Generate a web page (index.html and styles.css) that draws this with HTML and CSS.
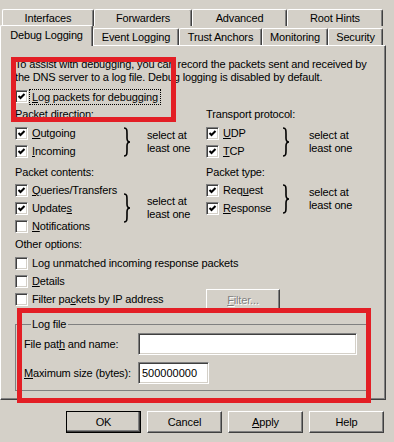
FILE: index.html
```html
<!DOCTYPE html>
<html lang="en">
<head>
    <meta charset="UTF-8">
    <meta name="viewport" content="width=device-width, initial-scale=1.0">
    <title>DNS Server Properties</title>
    <link rel="stylesheet" href="styles.css">
</head>
<body>
    <div class="dialog">
        <div class="tab-row back">
            <div class="tab" style="width: 92px">Interfaces</div>
            <div class="tab" style="width: 98px">Forwarders</div>
            <div class="tab" style="width: 95px">Advanced</div>
            <div class="tab" style="width: 96px">Root Hints</div>
        </div>
        <div class="tab-row front">
            <div class="tab selected" style="width: 93px">Debug Logging</div>
            <div class="tab" style="width: 86px">Event Logging</div>
            <div class="tab" style="width: 83px">Trust Anchors</div>
            <div class="tab" style="width: 66px">Monitoring</div>
            <div class="tab" style="width: 55px">Security</div>
        </div>

        <div class="panel">
            <p class="intro">To assist with debugging, you can record the packets sent and received by<br>the DNS server to a log file. Debug logging is disabled by default.</p>

            <div class="check-row first">
                <span class="cb"><svg viewBox="0 0 9 9"><path d="M1.5 4 L3.5 6 L7.5 2"/></svg></span>
                <span class="focus"><u>L</u>og packets for debugging</span>
            </div>

            <div class="options">
                <div class="col col-left">
                    <div class="caption">Packet direction:</div>
                    <div class="group">
                        <div class="checks">
                            <div class="check-row"><span class="cb"><svg viewBox="0 0 9 9"><path d="M1.5 4 L3.5 6 L7.5 2"/></svg></span><span><u>O</u>utgoing</span></div>
                            <div class="check-row"><span class="cb"><svg viewBox="0 0 9 9"><path d="M1.5 4 L3.5 6 L7.5 2"/></svg></span><span><u>I</u>ncoming</span></div>
                        </div>
                        <svg class="brace" viewBox="0 0 8 30"><path d="M1 1 C4 1 4 3 4 7 L4 11 C4 14 5 15 7 15 C5 15 4 16 4 19 L4 23 C4 27 4 29 1 29"/></svg>
                        <div class="note">select at<br>least one</div>
                    </div>

                    <div class="caption second">Packet contents:</div>
                    <div class="group">
                        <div class="checks">
                            <div class="check-row"><span class="cb"><svg viewBox="0 0 9 9"><path d="M1.5 4 L3.5 6 L7.5 2"/></svg></span><span><u>Q</u>ueries/Transfers</span></div>
                            <div class="check-row"><span class="cb"><svg viewBox="0 0 9 9"><path d="M1.5 4 L3.5 6 L7.5 2"/></svg></span><span>Update<u>s</u></span></div>
                            <div class="check-row"><span class="cb"></span><span><u>N</u>otifications</span></div>
                        </div>
                        <svg class="brace" viewBox="0 0 8 30"><path d="M1 1 C4 1 4 3 4 7 L4 11 C4 14 5 15 7 15 C5 15 4 16 4 19 L4 23 C4 27 4 29 1 29"/></svg>
                        <div class="note">select at<br>least one</div>
                    </div>
                </div>

                <div class="col col-right">
                    <div class="caption">Transport protocol:</div>
                    <div class="group">
                        <div class="checks">
                            <div class="check-row"><span class="cb"><svg viewBox="0 0 9 9"><path d="M1.5 4 L3.5 6 L7.5 2"/></svg></span><span><u>U</u>DP</span></div>
                            <div class="check-row"><span class="cb"><svg viewBox="0 0 9 9"><path d="M1.5 4 L3.5 6 L7.5 2"/></svg></span><span><u>T</u>CP</span></div>
                        </div>
                        <svg class="brace" viewBox="0 0 8 30"><path d="M1 1 C4 1 4 3 4 7 L4 11 C4 14 5 15 7 15 C5 15 4 16 4 19 L4 23 C4 27 4 29 1 29"/></svg>
                        <div class="note">select at<br>least one</div>
                    </div>

                    <div class="caption second">Packet type:</div>
                    <div class="group">
                        <div class="checks">
                            <div class="check-row"><span class="cb"><svg viewBox="0 0 9 9"><path d="M1.5 4 L3.5 6 L7.5 2"/></svg></span><span>Req<u>u</u>est</span></div>
                            <div class="check-row"><span class="cb"><svg viewBox="0 0 9 9"><path d="M1.5 4 L3.5 6 L7.5 2"/></svg></span><span><u>R</u>esponse</span></div>
                        </div>
                        <svg class="brace" viewBox="0 0 8 30"><path d="M1 1 C4 1 4 3 4 7 L4 11 C4 14 5 15 7 15 C5 15 4 16 4 19 L4 23 C4 27 4 29 1 29"/></svg>
                        <div class="note">select at<br>least one</div>
                    </div>
                </div>
            </div>

            <div class="caption other">Other options:</div>
            <div class="other-list">
                <div class="check-row"><span class="cb"></span><span>Log unmatched incoming response packets</span></div>
                <div class="check-row"><span class="cb"></span><span><u>D</u>etails</span></div>
                <div class="check-row filter-row">
                    <span class="cb"></span><span class="filter-label">Filter pa<u>c</u>kets by IP address</span>
                    <button class="btn disabled" disabled><u>F</u>ilter...</button>
                </div>
            </div>

            <fieldset class="logfile">
                <legend>Log file</legend>
                <div class="field-row">
                    <label>File pat<u>h</u> and name:</label>
                    <div class="textbox wide"></div>
                </div>
                <div class="field-row">
                    <label><u>M</u>aximum size (bytes):</label>
                    <div class="textbox narrow">500000000</div>
                </div>
            </fieldset>
        </div>

        <div class="buttons">
            <button class="btn default">OK</button>
            <button class="btn">Cancel</button>
            <button class="btn"><u>A</u>pply</button>
            <button class="btn">Help</button>
        </div>
    </div>

    <!-- red highlight marks drawn over the screenshot -->
    <div class="mark mark-top"></div>
    <div class="mark mark-bottom"></div>
</body>
</html>
```

FILE: styles.css
```css
body {
    margin: 0;
    width: 394px;
    height: 442px;
    overflow: hidden;
    position: relative;
    background-color: #d4d0c8;
    font-family: "Liberation Sans", Arial, sans-serif;
    font-size: 11px;
    letter-spacing: -0.15px;
    color: #000;
}

u {
    text-decoration: underline;
    text-underline-offset: 1px;
}

.dialog {
    padding-top: 9px;
}

/* tabs */
.tab-row {
    display: flex;
}

.tab-row.back {
    margin-left: 2px;
    height: 17px;
}

.tab-row.front {
    height: 19px;
    align-items: flex-end;
}

.tab {
    box-sizing: border-box;
    height: 17px;
    line-height: 16px;
    text-align: center;
    border-top: 1px solid #fff;
    border-left: 1px solid #fff;
    border-right: 1px solid #404040;
    border-radius: 2px 2px 0 0;
    box-shadow: inset -1px 0 #808080;
    background-color: #d4d0c8;
}

.tab.selected {
    height: 21px;
    line-height: 19px;
    margin-bottom: -1px;
    position: relative;
    z-index: 1;
}

/* main page */
.panel {
    box-sizing: border-box;
    width: 386px;
    height: 355px;
    border-top: 1px solid #fff;
    border-left: 1px solid #fff;
    border-right: 1px solid #404040;
    border-bottom: 1px solid #404040;
    box-shadow: inset -1px -1px #808080;
    padding: 12px 0 0 14px;
}

.intro {
    margin: 0;
    line-height: 13px;
    white-space: nowrap;
}

.check-row {
    display: flex;
    align-items: center;
    height: 18px;
    white-space: nowrap;
}

.check-row.first {
    height: 17px;
    margin-top: 4px;
}

.cb {
    box-sizing: border-box;
    width: 13px;
    height: 13px;
    flex: none;
    margin-right: 4px;
    background-color: #fff;
    border: 1px solid;
    border-color: #808080 #fff #fff #808080;
    box-shadow: inset 1px 1px #404040, inset -1px -1px #d4d0c8;
    display: flex;
    align-items: center;
    justify-content: center;
}

.cb svg {
    width: 9px;
    height: 9px;
}

.cb path {
    fill: none;
    stroke: #000;
    stroke-width: 2;
}

.focus {
    outline: 1px dotted #000;
    outline-offset: 1px;
    padding: 0 1px;
    margin-left: -1px;
}

.caption {
    line-height: 13px;
    margin-top: 3px;
    white-space: nowrap;
}

.caption.second {
    margin-top: 6px;
}

.options {
    display: flex;
}

.col-left {
    width: 191px;
}

.group {
    display: flex;
    align-items: center;
    margin-top: 3px;
}

.caption.second + .group {
    margin-top: 2px;
}

.col-left .checks {
    width: 108px;
}

.col-right .checks {
    width: 76px;
}

.brace {
    width: 8px;
    height: 30px;
    flex: none;
}

.brace path {
    fill: none;
    stroke: #000;
    stroke-width: 1.6;
}

.note {
    line-height: 13px;
    margin-left: 16px;
    white-space: nowrap;
}

.col-right .note {
    margin-left: 19px;
}

.caption.other {
    margin-top: 3px;
}

.other-list {
    margin-top: 3px;
}

.filter-label {
    width: 174px;
}

.btn {
    box-sizing: border-box;
    font-family: inherit;
    font-size: 11px;
    letter-spacing: inherit;
    color: #000;
    background-color: #d4d0c8;
    width: 75px;
    height: 22px;
    padding: 0;
    border: 1px solid;
    border-color: #fff #404040 #404040 #fff;
    box-shadow: inset -1px -1px #808080;
    border-radius: 0;
}

.btn.disabled {
    align-self: flex-start;
    margin-top: -1px;
    width: 74px;
    color: #808080;
    text-shadow: 1px 1px #fff;
}

.btn.default {
    outline: 1px solid #000;
    outline-offset: -1px;
    box-shadow: inset -1px -1px #404040, inset -2px -2px #808080;
}

/* log file group */
.logfile {
    box-sizing: border-box;
    width: 353px;
    margin: 10px 0 0 0;
    padding: 2px 0 6px 8px;
    border: 1px solid #808080;
    min-width: 0;
}

.logfile legend {
    line-height: 13px;
    padding: 0 2px 0 1px;
    margin-left: 7px;
}

.field-row {
    display: flex;
    align-items: center;
    height: 22px;
}

.field-row + .field-row {
    margin-top: 7px;
}

.field-row label {
    width: 114px;
    white-space: nowrap;
}

.textbox {
    box-sizing: border-box;
    height: 22px;
    background-color: #fff;
    border: 1px solid;
    border-color: #808080 #fff #fff #808080;
    box-shadow: inset 1px 1px #404040, inset -1px -1px #d4d0c8;
    padding: 3px 0 0 3px;
    line-height: 14px;
    font-size: 11px;
    letter-spacing: 0;
}

.textbox.wide {
    width: 219px;
}

.textbox.narrow {
    width: 71px;
}

.buttons {
    display: flex;
    justify-content: flex-end;
    gap: 6px;
    margin-top: 11px;
    padding-right: 10px;
}

/* annotation boxes */
.mark {
    position: absolute;
    box-sizing: border-box;
    border: 5px solid #e31e25;
}

.mark-top {
    left: 11px;
    top: 57px;
    width: 165px;
    height: 65px;
}

.mark-bottom {
    left: 17px;
    top: 308px;
    width: 354px;
    height: 95px;
}
```
